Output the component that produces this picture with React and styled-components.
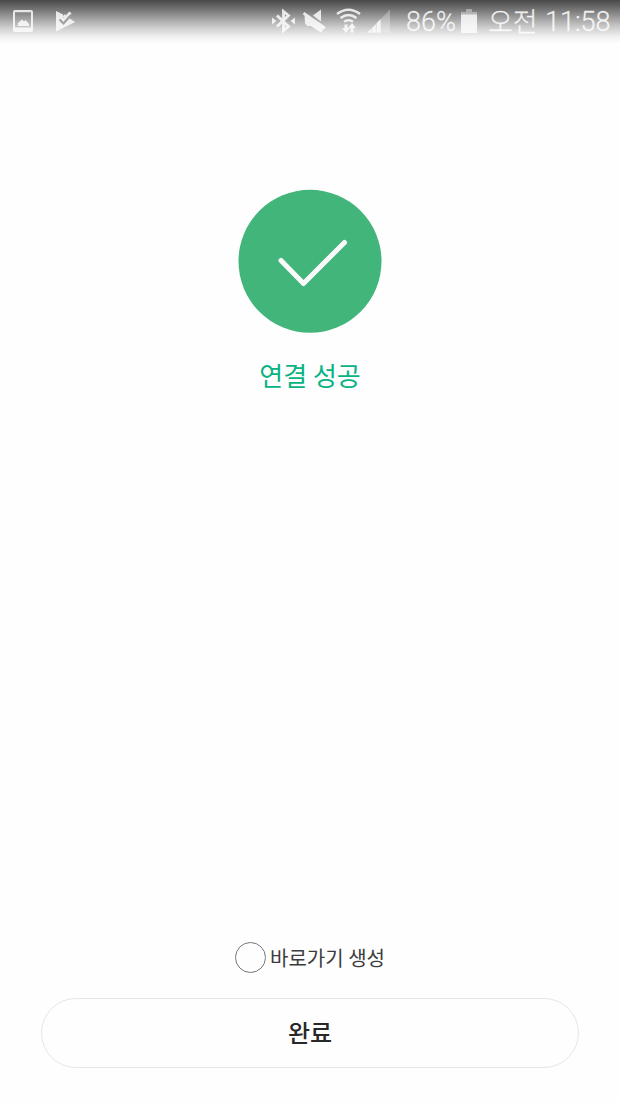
import styled, { createGlobalStyle } from 'styled-components';

const GlobalStyle = createGlobalStyle`
  body {
    margin: 0;
    background-color: #fefefe;
  }
`;

const Screen = styled.div`
  display: flex;
  flex-direction: column;
  box-sizing: border-box;
  height: 1102px;
  font-family: 'Noto Sans CJK KR', sans-serif;
  background-color: #fefefe;
`;

const StatusBar = styled.header`
  display: flex;
  justify-content: space-between;
  height: 44px;
  background: linear-gradient(#484848 0, #525252 2px, #777 10px, #a4a4a4 19px, #cfcfcf 28px, #f1f1f1 37px, #fefefe 44px);
`;

const StatusGroup = styled.div`
  display: flex;
  align-items: flex-start;

  svg {
    display: block;
    flex: none;
    fill: #fff;
    opacity: 0.82;
  }
`;

const StatusText = styled.span`
  width: ${props => props.$width}px;
  margin-left: ${props => props.$gap}px;
  padding-top: 6px;
  font-family: Roboto, 'Noto Sans CJK KR', sans-serif;
  font-size: 27px;
  font-weight: 300;
  line-height: 33px;
  white-space: nowrap;
  color: rgba(255, 255, 255, 0.86);
  -webkit-text-stroke: 0.3px rgba(255, 255, 255, 0.7);
`;

const Meridiem = styled(StatusText)`
  padding-top: 4px;
  font-family: 'Noto Sans CJK KR', sans-serif;
`;

const Result = styled.main`
  display: flex;
  flex: 1;
  flex-direction: column;
  align-items: center;
  padding-top: 145px;
`;

const Badge = styled.div`
  width: 144px;
  height: 144px;

  svg {
    display: block;
  }
`;

const Title = styled.h1`
  margin: 23px 0 0;
  font-size: 26px;
  font-weight: 400;
  line-height: 38px;
  color: #08b384;
`;

const Footer = styled.footer`
  display: flex;
  flex-direction: column;
  padding: 0 41px 34px;
`;

const ShortcutOption = styled.label`
  display: flex;
  align-items: center;
  align-self: center;
  margin-bottom: 25px;
  font-size: 20px;
  line-height: 31px;
  color: #3c3c3c;
`;

const Radio = styled.span`
  box-sizing: border-box;
  width: 31px;
  height: 31px;
  margin-right: 4px;
  border: 1px solid #777;
  border-radius: 50%;
`;

const DoneButton = styled.button`
  height: 70px;
  padding: 0 0 2px;
  border: 1px solid #e6e6e6;
  border-radius: 35px;
  background-color: #fefefe;
  font-family: inherit;
  font-size: 24px;
  font-weight: 500;
  line-height: 36px;
  color: #282828;
`;

const NotificationIcons = () => (
  <svg width='100' height='44' viewBox='0 0 100 44'>
    <path fillRule='evenodd' d='M15 10h16a2 2 0 0 1 2 2v18a2 2 0 0 1-2 2H15a2 2 0 0 1-2-2V12a2 2 0 0 1 2-2zm0 2.200v15.300h16V12.200z' />
    <path d='M18 26v-3l4-3.500 2 2 1.500-1.500 3.500 4v2z' />
    <path d='M56 11l7 3.500v3l12 4.500-19 9.500z' />
    <path d='M63.500 15.500L66 17.500L70.500 12.500' fill='none' stroke='#fff' strokeWidth='3' />
    <path d='M64 18h5l6 4-9 4z' />
    <path d='M59.500 19.500l4 4 7.500-8.500' fill='none' stroke='#9c9c9c' strokeWidth='2' />
  </svg>
);

const SystemIcons = () => (
  <svg width='130' height='44' viewBox='266 0 130 44'>
    <path d='M272 17.500v7l4.500-3.500zM295 17.500v7l-4.500-3.500z' />
    <path
      d='M277 15.500l11.500 11L283.500 30.500V11.500l5 4-11.500 11'
      fill='none'
      stroke='#fff'
      strokeWidth='2.800'
    />
    <path d='M313 15.500l8-6v12zM304.500 14.500l20 13.500-3.500 4.500-10-6.500h-3.500l-2.500-2.500z' />
    <path d='M303.500 13.200l21.500 15' fill='none' stroke='#fff' strokeWidth='2.800' />
    <g fill='none' stroke='#fff' strokeWidth='2.500'>
      <path d='M337 14q11.500-8.500 23 0' />
      <path d='M340.500 18q8-6 16 0' />
      <path d='M344 21.700q4.500-3 9 0' />
    </g>
    <path d='M344.500 24.500h3V28h2.500l-4 5-4-5h2.500zM350.500 32.500V28h-2.500l4-5 4 5h-2.500v4.500z' />
    <path d='M390 9.500v23h-22z' opacity='0.350' />
    <path
      d='M367.500 32.500l3.500-3.500v3.500zM372.300 32.500v-4.500l3.400-3.500v8zM376.800 32.500v-9.500l3.700-3.500v13z'
      stroke='#fff'
      strokeWidth='0.400'
    />
  </svg>
);

const BatteryIcon = () => (
  <svg width='16' height='44' viewBox='0 0 16 44'>
    <path d='M5 9h6v3h5v3H0v-3h5z' opacity='0.450' />
    <path d='M0 14.500h16V33H0z' />
  </svg>
);

const App = () => {
  return (
    <>
      <GlobalStyle />
      <Screen>
        <StatusBar>
          <StatusGroup>
            <NotificationIcons />
          </StatusGroup>
          <StatusGroup>
            <SystemIcons />
            <StatusText $width={55} $gap={10}>86%</StatusText>
            <BatteryIcon />
            <Meridiem $width={50} $gap={11}>오전</Meridiem>
            <StatusText $width={75} $gap={7}>11:58</StatusText>
          </StatusGroup>
        </StatusBar>
        <Result>
          <Badge>
            <svg width='144' height='144' viewBox='0 0 144 144'>
              <circle cx='72' cy='72.300' r='71.500' fill='#41b57a' />
              <path
                d='M43 71.500L65.500 94.500L106.500 53.500'
                fill='none'
                stroke='#fafafa'
                strokeWidth='5'
                strokeLinecap='round'
                strokeLinejoin='round'
              />
            </svg>
          </Badge>
          <Title>연결 성공</Title>
        </Result>
        <Footer>
          <ShortcutOption>
            <Radio />
            바로가기 생성
          </ShortcutOption>
          <DoneButton>완료</DoneButton>
        </Footer>
      </Screen>
    </>
  );
}

export default App;
